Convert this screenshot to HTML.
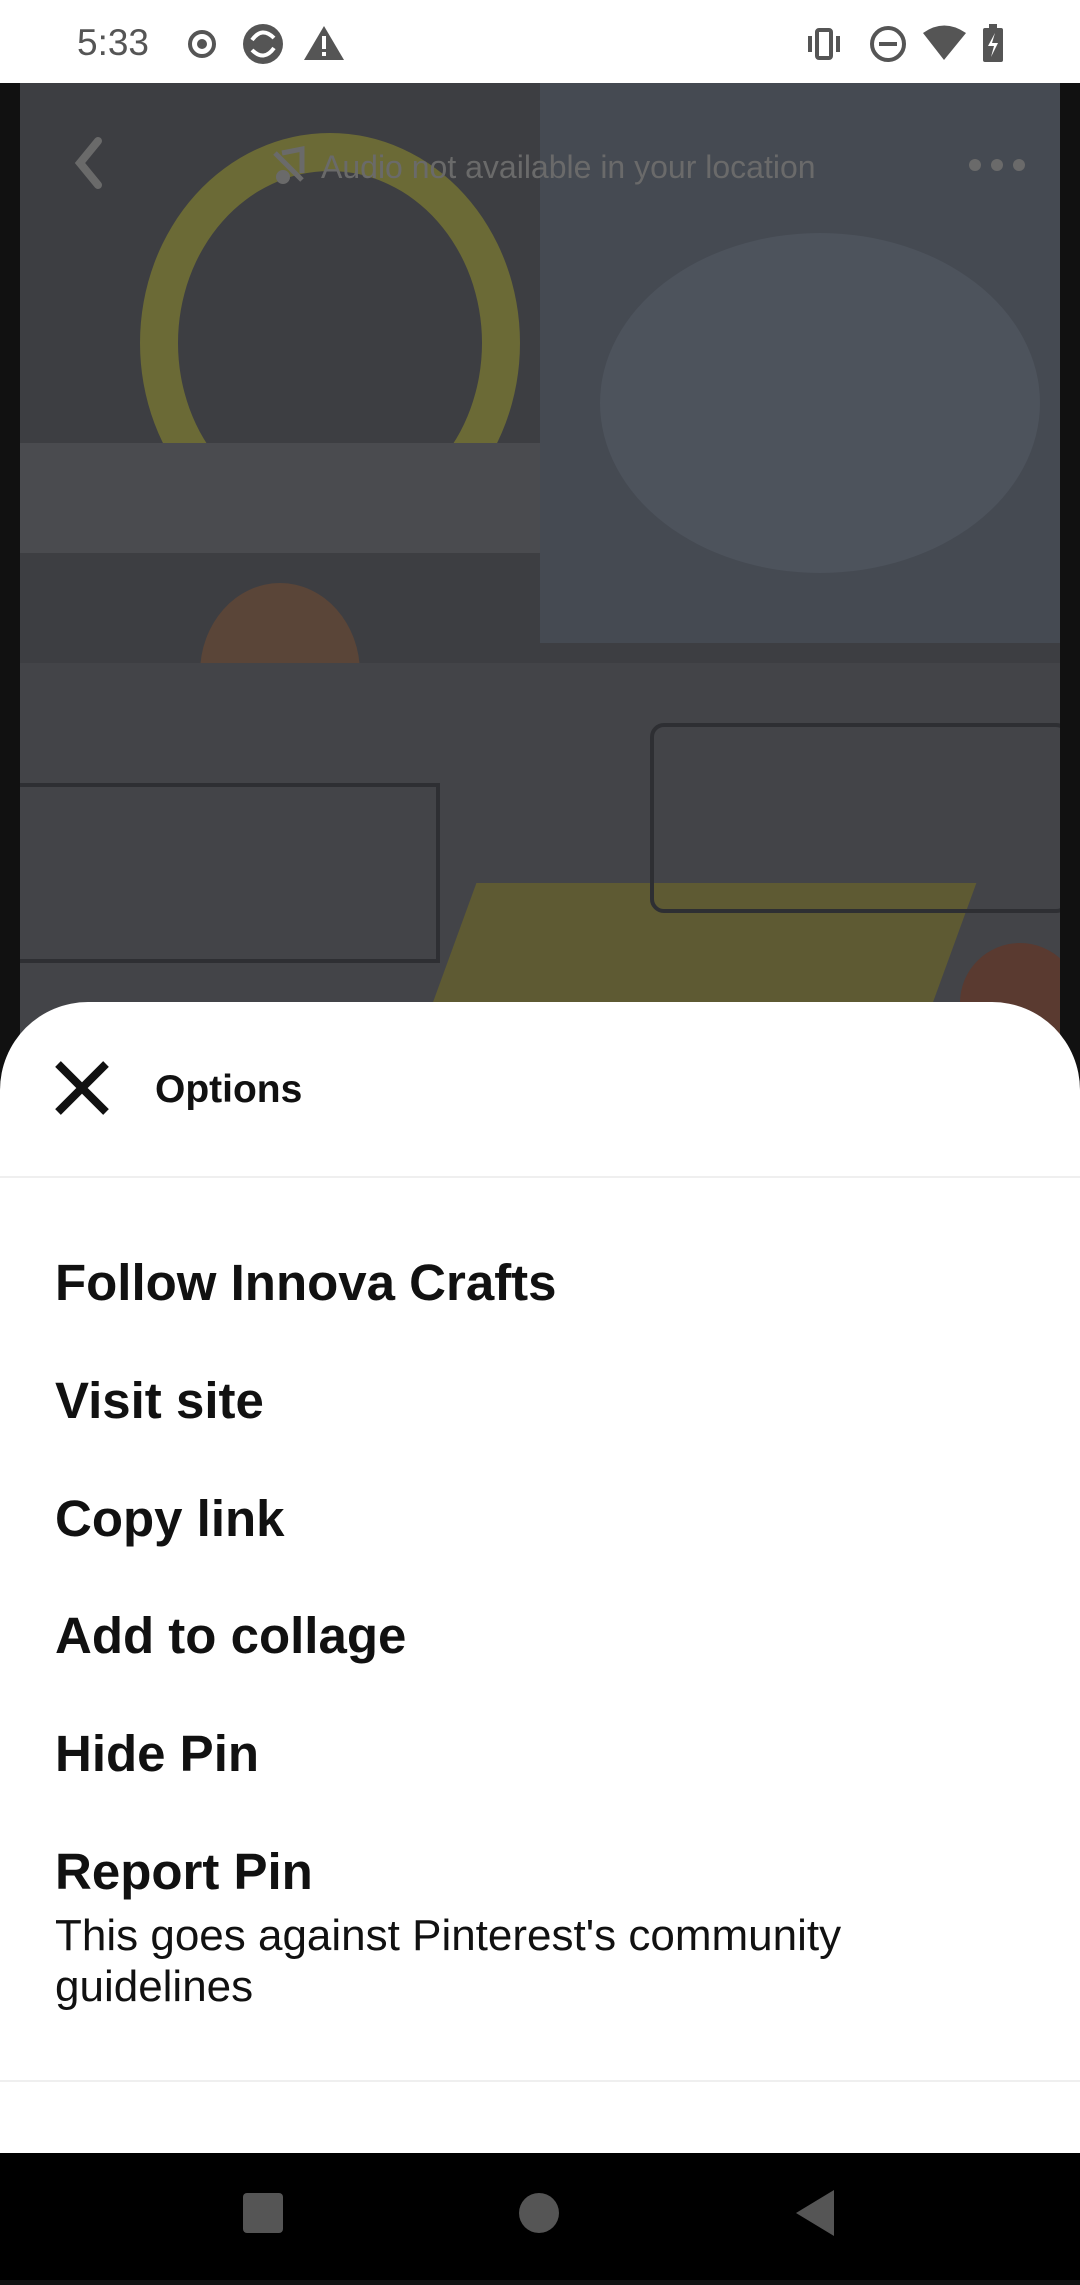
<!DOCTYPE html>
<html><head><meta charset="utf-8"><style>
*{margin:0;padding:0;box-sizing:border-box}
body{width:1080px;height:2280px;overflow:hidden;background:#111;font-family:"Liberation Sans",sans-serif;position:relative}
.status{position:absolute;left:0;top:0;width:1080px;height:83px;background:#fff}
.time{position:absolute;left:77px;top:22px;font-size:37px;color:#555}
.img{position:absolute;left:20px;top:83px;width:1040px;height:960px;background:#3d3e42;overflow:hidden}
.blob{position:absolute;border-radius:50%}
.sheet{position:absolute;left:0;top:1002px;width:1080px;height:1152px;background:#fff;border-radius:88px 88px 0 0}
.nav{position:absolute;left:0;top:2153px;width:1080px;height:127px;background:#000}
.item{position:absolute;left:55px;font-size:51px;font-weight:bold;color:#111;line-height:60px}
</style></head><body>
<div class="status">
<div class="time">5:33</div>
<svg width="1080" height="83" style="position:absolute;left:0;top:0">
<circle cx="202" cy="44" r="12" fill="none" stroke="#555" stroke-width="4"/><circle cx="202" cy="44" r="5" fill="#555"/>
<circle cx="263" cy="44" r="20" fill="#555"/><path d="M252 40 q10 -14 22 -2 M274 48 q-10 14 -22 2" stroke="#fff" stroke-width="4" fill="none"/>
<path d="M324 26 L344 60 L304 60 Z" fill="#555"/><rect x="322" y="36" width="4" height="13" fill="#fff"/><rect x="322" y="52" width="4" height="4" fill="#fff"/>
<rect x="817" y="30" width="14" height="28" rx="2" fill="none" stroke="#555" stroke-width="4"/><rect x="808" y="36" width="4" height="16" fill="#555"/><rect x="836" y="36" width="4" height="16" fill="#555"/>
<circle cx="888" cy="44" r="16" fill="none" stroke="#555" stroke-width="4"/><rect x="879" y="42" width="18" height="4" fill="#555"/>
<path d="M923 33 Q944 18 966 33 L944 60 Z" fill="#555"/>
<rect x="983" y="28" width="20" height="34" rx="2" fill="#555"/><rect x="989" y="24" width="8" height="5" fill="#555"/><path d="M995 33 L988 46 L994 46 L991 57 L998 43 L992 43 Z" fill="#fff"/>
</svg>
</div>
<div class="img">
<div class="blob" style="left:120px;top:50px;width:380px;height:420px;border:38px solid #6b6a36;background:transparent"></div>
<div class="blob" style="left:180px;top:500px;width:160px;height:180px;background:#5a4538"></div>
<div style="position:absolute;left:520px;top:0;width:520px;height:560px;background:#454a52"></div>
<div class="blob" style="left:580px;top:150px;width:440px;height:340px;background:#4d535c"></div>
<div style="position:absolute;left:0;top:580px;width:1040px;height:400px;background:#434448"></div>
<div style="position:absolute;left:420px;top:800px;width:500px;height:200px;background:#5e5a33;transform:skewX(-20deg)"></div>
<div style="position:absolute;left:940px;top:860px;width:120px;height:120px;background:#5a3a30;border-radius:50%"></div>
<div style="position:absolute;left:0;top:360px;width:520px;height:110px;background:#4a4b4f"></div>
<div style="position:absolute;left:630px;top:640px;width:420px;height:190px;border:4px solid #2e2f33;border-radius:14px"></div>
<div style="position:absolute;left:0;top:700px;width:420px;height:180px;border:4px solid #2e2f33;border-left:none"></div>
<svg width="1040" height="120" style="position:absolute;left:0;top:0">
<path d="M78 58 L60 80 L78 102" stroke="#6a6a6a" stroke-width="8" fill="none" stroke-linecap="round"/>
<circle cx="955" cy="82" r="6" fill="#6a6a6a"/><circle cx="977" cy="82" r="6" fill="#6a6a6a"/><circle cx="999" cy="82" r="6" fill="#6a6a6a"/>
<path d="M255 70 L282 97 M262 70 L282 66 L282 90" stroke="#6a6a6a" stroke-width="5" fill="none"/><circle cx="263" cy="94" r="7" fill="#6a6a6a"/>
</svg>
<div style="position:absolute;left:301px;top:66px;font-size:32px;color:#6a6a6a">Audio not available in your location</div>
</div>
<div class="sheet">
<svg width="60" height="60" style="position:absolute;left:52px;top:56px"><path d="M6 6 L54 54 M54 6 L6 54" stroke="#111" stroke-width="8"/></svg>
<div style="position:absolute;left:155px;top:66px;font-size:39px;font-weight:bold;color:#111">Options</div>
<div style="position:absolute;left:0;top:174px;width:1080px;height:2px;background:#efefef"></div>
<div class="item" style="top:251px">Follow Innova Crafts</div>
<div class="item" style="top:369px">Visit site</div>
<div class="item" style="top:487px">Copy link</div>
<div class="item" style="top:604px">Add to collage</div>
<div class="item" style="top:722px">Hide Pin</div>
<div class="item" style="top:840px">Report Pin</div>
<div style="position:absolute;left:55px;top:908px;font-size:44px;color:#111;line-height:51px;width:880px">This goes against Pinterest's community guidelines</div>
<div style="position:absolute;left:0;top:1078px;width:1080px;height:2px;background:#efefef"></div>
</div>
<div class="nav">
<svg width="1080" height="127"><rect x="243" y="40" width="40" height="40" rx="4" fill="#555"/><circle cx="539" cy="60" r="20" fill="#555"/><path d="M834 37 L834 83 L796 60 Z" fill="#555"/></svg>
</div>
</body></html>
